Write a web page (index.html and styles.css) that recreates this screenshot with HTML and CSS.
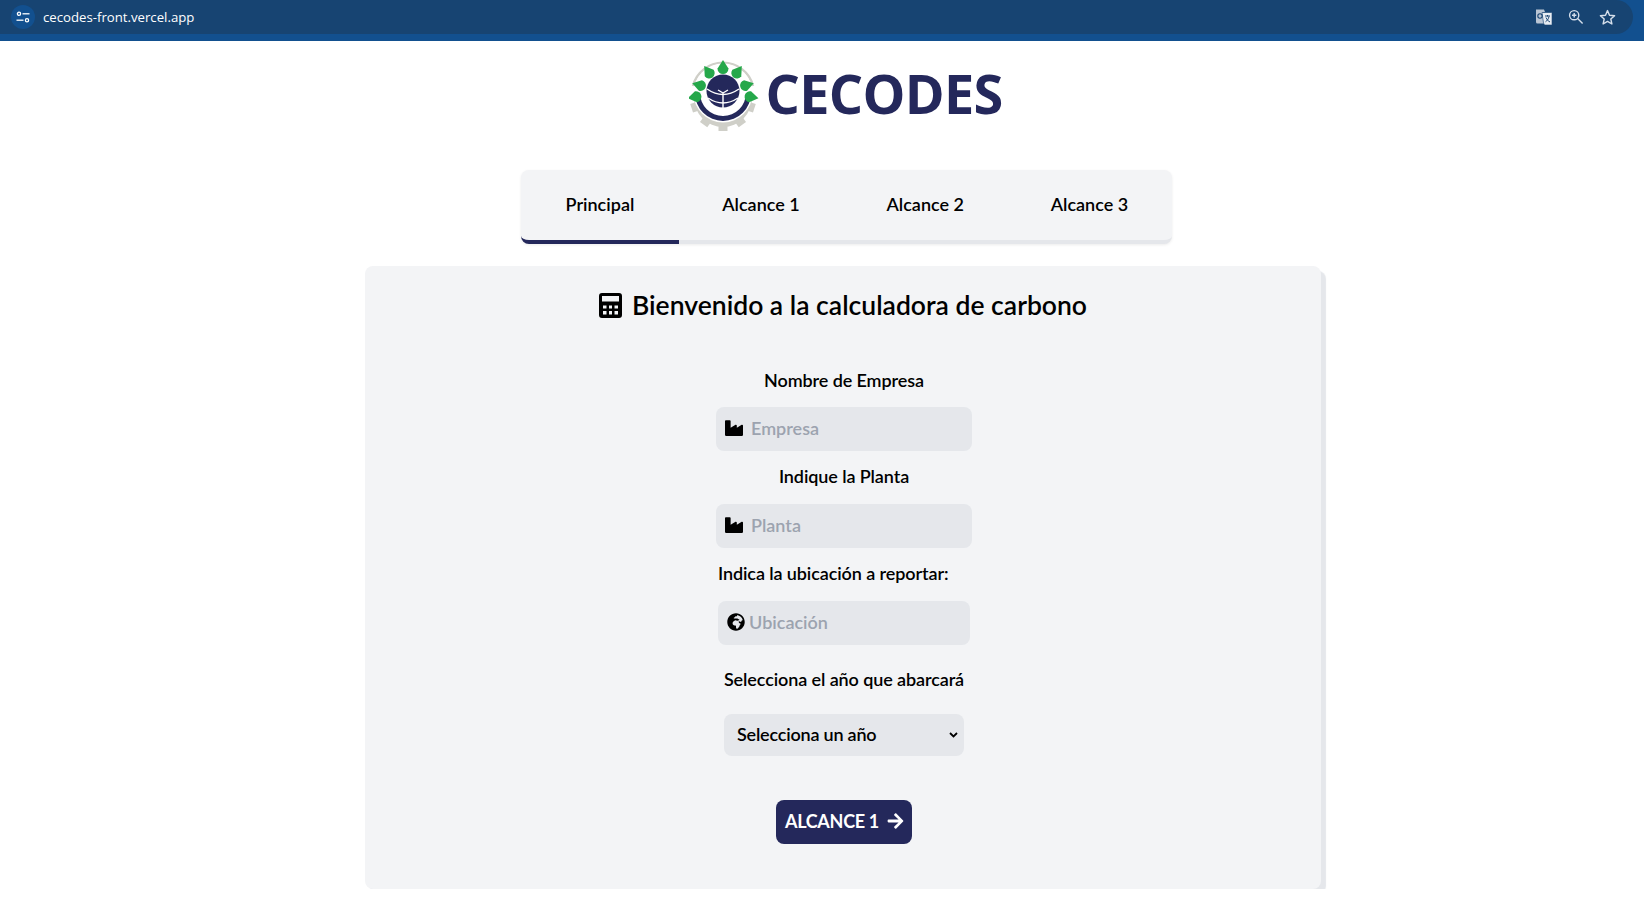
FILE: index.html
```html
<!DOCTYPE html>
<html lang="es">
<head>
    <meta charset="UTF-8">
    <meta name="viewport" content="width=device-width, initial-scale=1.0">
    <title>CECODES</title>
    <link rel="stylesheet" href="styles.css">
</head>
<body>
    <div class="browser-bar">
        <div class="omnibox">
            <span class="site-btn">
                <svg width="14" height="12" viewBox="0 0 14 12" fill="none" stroke="#fff" stroke-width="1.3">
                    <circle cx="3" cy="2.8" r="1.6"/>
                    <path d="M6.5 2.8H13.5"/>
                    <circle cx="11" cy="9.2" r="1.6"/>
                    <path d="M0.5 9.2H7.5"/>
                </svg>
            </span>
            <span class="url">cecodes-front.vercel.app</span>
            <span class="omni-actions">
                <svg width="18" height="18" viewBox="0 0 18 18">
                    <path d="M1 1.5H9L10 4H7.5L9 15.5H2.5A1.5 1.5 0 0 1 1 14Z" fill="#b9c5d4"/>
                    <path d="M7 4.5H16.5A.8.8 0 0 1 17 5.3V16.2A.8.8 0 0 1 16.5 17H9.5L8.5 15Z" fill="#e8edf3" stroke="#1a4573" stroke-width=".6"/>
                    <circle cx="5" cy="8" r="2.2" fill="none" stroke="#1a4573" stroke-width="1.1"/>
                    <path d="M10 8H15M12.5 7V8.5M14 8.5C13.5 11 12 13 10.5 13.8M11 9.5C11.8 11.5 13.2 13 15 14" fill="none" stroke="#1a4573" stroke-width="1"/>
                </svg>
                <svg width="16" height="16" viewBox="0 0 16 16" fill="none" stroke="#d5dfeb" stroke-width="1.4">
                    <circle cx="6.2" cy="6.2" r="4.6"/>
                    <path d="M9.6 9.6L14.6 14.6M4 6.2H8.4M6.2 4V8.4"/>
                </svg>
                <svg width="17" height="17" viewBox="0 0 17 17" fill="none" stroke="#d5dfeb" stroke-width="1.4" stroke-linejoin="round">
                    <path d="M8.5 1.6L10.5 6.2L15.6 6.7L11.8 10L12.9 15L8.5 12.4L4.1 15L5.2 10L1.4 6.7L6.5 6.2Z"/>
                </svg>
            </span>
        </div>
    </div>

    <div class="page">
        <header class="logo">
            <svg class="logo-mark" width="72" height="74" viewBox="9 2 72 74">
                <!-- engranaje -->
                <path d="M13 30A31 31 0 0 1 73 30" fill="none" stroke="#cfcfc8" stroke-width="2.500"/>
                <circle cx="43" cy="42" r="29" fill="#cfcfc8"/>
                <g fill="#cfcfc8">
                    <rect x="38.500" y="66" width="9" height="9"/>
                    <rect x="38.500" y="66" width="9" height="9" transform="rotate(36 43 42)"/>
                    <rect x="38.500" y="66" width="9" height="9" transform="rotate(-36 43 42)"/>
                    <rect x="38.500" y="66" width="9" height="9" transform="rotate(72 43 42)"/>
                    <rect x="38.500" y="66" width="9" height="9" transform="rotate(-72 43 42)"/>
                </g>
                <circle cx="43" cy="37" r="29.500" fill="#fff"/>
                <!-- anillo -->
                <path d="M15 37A28 28 0 0 0 71 37L66 37A23 23 0 0 1 20 37Z" fill="#24285b"/>
                <!-- globo -->
                <circle cx="43" cy="35" r="16.500" fill="#24285b"/>
                <path d="M43 37V60M43 37L38 34M43 37L48 34M27 33Q43 44 59 33M28 42Q43 52 58 42" fill="none" stroke="#fff" stroke-width="1.400"/>
                <!-- hojas -->
                <g fill="#25a84a">
                    <path d="M43 4L48.500 12.500A5.500 5.500 0 1 1 37.500 12.500Z"/>
                    <path d="M43 4L48.500 12.500A5.500 5.500 0 1 1 37.500 12.500Z" transform="rotate(36 43 36)"/>
                    <path d="M43 4L48.500 12.500A5.500 5.500 0 1 1 37.500 12.500Z" transform="rotate(-36 43 36)"/>
                    <path d="M43 4L48.500 12.500A5.500 5.500 0 1 1 37.500 12.500Z" transform="rotate(74 43 36)"/>
                    <path d="M43 4L48.500 12.500A5.500 5.500 0 1 1 37.500 12.500Z" transform="rotate(-74 43 36)"/>
                    <path d="M43 0L48.500 8.500A5.500 5.500 0 1 1 37.500 8.500Z" transform="rotate(100 43 36)"/>
                    <path d="M43 0L48.500 8.500A5.500 5.500 0 1 1 37.500 8.500Z" transform="rotate(-100 43 36)"/>
                </g>
            </svg>
            <span class="logo-text">CECODES</span>
        </header>

        <nav class="tabs">
            <a class="tab active">Principal</a>
            <a class="tab">Alcance 1</a>
            <a class="tab">Alcance 2</a>
            <a class="tab">Alcance 3</a>
        </nav>

        <main class="card">
            <h1 class="card-title">
                <svg width="23" height="25" viewBox="0 0 23 25">
                    <path fill-rule="evenodd" d="M3 0H20A3 3 0 0 1 23 3V22A3 3 0 0 1 20 25H3A3 3 0 0 1 0 22V3A3 3 0 0 1 3 0ZM3 3V8.500H20V3ZM4 12.500V15.500H7.500V12.500ZM10 12.500V15.500H13V12.500ZM15.500 12.500V15.500H19V12.500ZM4 18V21.500H7.500V18ZM10 18V21.500H13V18ZM15.500 18V21.500H19V18Z"/>
                </svg>
                Bienvenido a la calculadora de carbono
            </h1>

            <form class="form">
                <label class="label" for="empresa">Nombre de Empresa</label>
                <div class="field">
                    <svg class="field-icon" width="18" height="18" viewBox="0 0 512 512"><path d="M475.115 163.781L336 252.309v-68.28c0-18.916-20.931-30.399-36.885-20.248L160 252.309V56c0-13.255-10.745-24-24-24H24C10.745 32 0 42.745 0 56v400c0 13.255 10.745 24 24 24h464c13.255 0 24-10.745 24-24V184.029c0-18.917-20.931-30.399-36.885-20.248z"/></svg>
                    <input type="text" id="empresa" placeholder="Empresa">
                </div>

                <label class="label label-tight" for="planta">Indique la Planta</label>
                <div class="field">
                    <svg class="field-icon" width="18" height="18" viewBox="0 0 512 512"><path d="M475.115 163.781L336 252.309v-68.28c0-18.916-20.931-30.399-36.885-20.248L160 252.309V56c0-13.255-10.745-24-24-24H24C10.745 32 0 42.745 0 56v400c0 13.255 10.745 24 24 24h464c13.255 0 24-10.745 24-24V184.029c0-18.917-20.931-30.399-36.885-20.248z"/></svg>
                    <input type="text" id="planta" placeholder="Planta">
                </div>

                <div class="location">
                    <label class="label label-tight label-left" for="ubicacion">Indica la ubicación a reportar:</label>
                    <div class="field field-location">
                        <svg class="field-icon" width="18" height="18" viewBox="0 0 496 512"><path d="M248 8C111.03 8 0 119.03 0 256s111.03 248 248 248 248-111.03 248-248S384.97 8 248 8zm160 215.5v6.93c0 5.87-3.32 11.24-8.57 13.86l-15.39 7.7a15.485 15.485 0 0 1-15.53-.97l-18.21-12.14a15.52 15.52 0 0 0-13.5-1.81l-2.65.88c-9.7 3.23-13.66 14.79-7.99 23.3l13.24 19.86c2.87 4.31 7.71 6.9 12.89 6.9h8.21c8.56 0 15.5 6.94 15.5 15.5v11.34c0 3.35-1.09 6.62-3.1 9.3l-18.74 24.98c-1.42 1.9-2.39 4.1-2.83 6.43l-4.3 22.83c-.62 3.29-2.29 6.29-4.76 8.56a159.608 159.608 0 0 0-25 29.16l-13.03 19.55a27.756 27.756 0 0 1-23.09 12.36c-10.51 0-20.12-5.94-24.82-15.34a78.902 78.902 0 0 1-8.33-35.29V367.5c0-8.56-6.94-15.5-15.5-15.5h-25.88c-14.49 0-28.38-5.76-38.63-16a54.63 54.63 0 0 1-16-38.63v-14.06c0-17.19 8.1-33.38 21.85-43.7l27.58-20.69a54.663 54.663 0 0 1 32.78-10.93h.89c8.48 0 16.85 1.97 24.43 5.77l14.72 7.36c3.68 1.84 7.93 2.14 11.83.84l47.31-15.77c6.33-2.11 10.6-8.03 10.6-14.7 0-8.56-6.94-15.5-15.5-15.5h-10.09c-4.11 0-8.05-1.63-10.96-4.54l-6.92-6.92a15.493 15.493 0 0 0-10.96-4.54H199.5c-8.56 0-15.5-6.94-15.5-15.5v-4.4c0-7.11 4.84-13.31 11.74-15.04l14.45-3.61c3.74-.94 7-3.23 9.14-6.44l8.08-12.11c2.87-4.31 7.71-6.9 12.89-6.9h24.21c8.56 0 15.5-6.94 15.5-15.5v-21.7C359.23 71.63 422.86 131.02 441.93 208H423.5c-8.56 0-15.5 6.94-15.5 15.5z"/></svg>
                        <input type="text" id="ubicacion" placeholder="Ubicación">
                    </div>
                </div>

                <label class="label label-year" for="anio">Selecciona el año que abarcará</label>
                <select class="year-select" id="anio">
                    <option>Selecciona un año</option>
                </select>

                <button type="button" class="next-btn">
                    ALCANCE 1
                    <svg width="17" height="18" viewBox="0 0 448 512" fill="#fff"><path d="M190.5 66.9l22.2-22.2c9.4-9.4 24.6-9.4 33.9 0L441 239c9.4 9.4 9.4 24.6 0 33.9L246.6 467.3c-9.4 9.4-24.6 9.4-33.9 0l-22.2-22.2c-9.5-9.5-9.3-25 .4-34.3L311.4 296H24c-13.3 0-24-10.7-24-24v-32c0-13.3 10.7-24 24-24h287.4L190.9 101.2c-9.8-9.3-10-24.8-.4-34.3z"/></svg>
                </button>
            </form>
        </main>
    </div>
</body>
</html>
```

FILE: styles.css
```css
* {
    box-sizing: border-box;
}
body {
    margin: 0;
    background: #fff;
    color: #000;
    font-family: Lato, "Liberation Sans", sans-serif;
}
.browser-bar {
    height: 41px;
    background: #12508f;
}
.omnibox {
    display: flex;
    align-items: center;
    height: 34px;
    margin-right: 11px;
    padding: 0 17px 0 11px;
    background: #174472;
    border-radius: 0 17px 17px 0;
}
.site-btn {
    display: flex;
    align-items: center;
    justify-content: center;
    width: 24px;
    height: 24px;
    background: #12508f;
    border-radius: 50%;
}
.url {
    margin-left: 8px;
    color: #fff;
    font-family: "Open Sans", sans-serif;
    font-size: 13.2px;
}
.omni-actions {
    display: flex;
    align-items: center;
    gap: 15px;
    margin-left: auto;
}
.page {
    padding-left: 46px;
}
.logo {
    display: flex;
    align-items: center;
    justify-content: center;
    gap: 4px;
    height: 98px;
    padding: 10px 0 0 2px;
}
.logo-text {
    margin-top: -4px;
    color: #24285b;
    font-family: "Open Sans", sans-serif;
    font-size: 54px;
    font-weight: 700;
    letter-spacing: -0.7px;
}
.tabs {
    display: flex;
    width: fit-content;
    height: 74px;
    margin: 31px 0 0 475px;
    background: #f3f4f6;
    border-bottom: 4px solid #e5e7eb;
    border-radius: 8px;
    box-shadow: 0 1px 3px rgba(0,0,0,0.08);
}
.tab {
    display: flex;
    align-items: center;
    justify-content: center;
    height: 74px;
    padding: 0 43.4px 2px;
    font-size: 18px;
    font-weight: 600;
    white-space: nowrap;
    border-bottom: 4px solid transparent;
    border-radius: 0 0 0 8px;
}
.tab.active {
    padding: 0 44.6px 2px;
    border-bottom-color: #24285b;
}
.card {
    width: 956px;
    height: 623px;
    margin: 22px 0 0 319px;
    padding-top: 21px;
    background: #f3f4f6;
    border-radius: 8px;
    box-shadow: 5px 5px 1px #e5e7eb;
}
.card-title {
    display: flex;
    align-items: center;
    justify-content: center;
    gap: 10px;
    margin: 0 0 46px;
    font-size: 26.5px;
    font-weight: 600;
    line-height: 36px;
}
.form {
    display: flex;
    flex-direction: column;
    align-items: center;
    padding-left: 2px;
}
.label {
    margin-bottom: 16px;
    font-size: 18px;
    font-weight: 600;
    letter-spacing: -0.1px;
    line-height: 22px;
}
.label-tight {
    margin-top: 14px;
    margin-bottom: 17px;
}
.label-left {
    display: block;
}
.label-year {
    margin-top: 23px;
    margin-bottom: 24px;
}
.location {
    width: 252px;
}
.field {
    display: flex;
    align-items: center;
    gap: 8px;
    width: 256px;
    height: 44px;
    padding: 0 9px;
    background: #e5e7eb;
    border-radius: 8px;
}
.field-location {
    gap: 4px;
    width: 252px;
}
.field-icon {
    flex-shrink: 0;
    margin-top: -2px;
}
.field input {
    flex: 1;
    min-width: 0;
    padding: 0 0 2px;
    border: none;
    outline: none;
    background: transparent;
    font-family: inherit;
    font-size: 18px;
    font-weight: 600;
}
.field input::placeholder {
    color: #9ca3af;
}
.year-select {
    width: 240px;
    height: 42px;
    padding: 0 13px 2px;
    border: none;
    appearance: none;
    background: #e5e7eb url("data:image/svg+xml,%3Csvg xmlns='http://www.w3.org/2000/svg' width='9' height='6'%3E%3Cpath d='M1 1l3.500 3.500L8 1' fill='none' stroke='%23000' stroke-width='1.800'/%3E%3C/svg%3E") no-repeat right 6px center;
    border-radius: 8px;
    color: #000;
    font-family: inherit;
    font-size: 18px;
    font-weight: 600;
    letter-spacing: -0.2px;
}
.next-btn {
    display: flex;
    align-items: center;
    gap: 8px;
    height: 44px;
    margin-top: 44px;
    padding: 0 8px 2px 9px;
    border: none;
    background: #24285b;
    border-radius: 8px;
    color: #fff;
    font-family: inherit;
    font-size: 18px;
    font-weight: 700;
    letter-spacing: -0.3px;
}
```
